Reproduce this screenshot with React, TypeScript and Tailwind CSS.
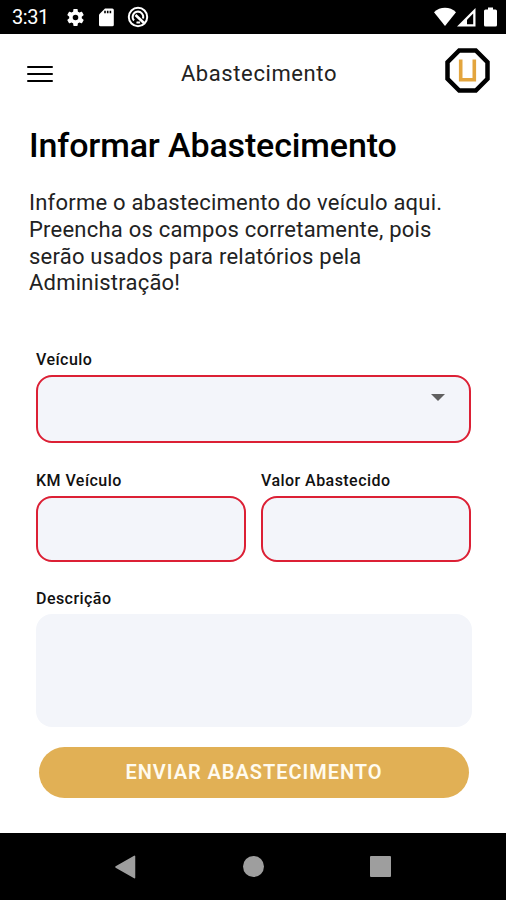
import React from "react";

function StatusBar() {
  return (
    <div className="flex h-[34px] items-center bg-black pl-3 text-white">
      <span className="w-[37px] whitespace-nowrap pt-px text-[20px] leading-[33px] tracking-[-0.4px]">3:31</span>
      <svg className="ml-4 size-[21px]" viewBox="0 0 24 24" fill="currentColor">
        <path d="M19.14 12.94c.04-.3.06-.61.06-.94 0-.32-.02-.64-.07-.94l2.03-1.58c.18-.14.23-.41.12-.61l-1.92-3.32c-.12-.22-.37-.29-.59-.22l-2.39.96c-.5-.38-1.03-.7-1.62-.94l-.36-2.54c-.04-.24-.24-.41-.48-.41h-3.84c-.24 0-.43.17-.47.41l-.36 2.54c-.59.24-1.13.57-1.62.94l-2.39-.96c-.22-.08-.47 0-.59.22L2.74 8.87c-.12.21-.08.47.12.61l2.03 1.58c-.05.3-.09.63-.09.94s.02.64.07.94l-2.03 1.58c-.18.14-.23.41-.12.61l1.92 3.32c.12.22.37.29.59.22l2.39-.96c.5.38 1.03.7 1.62.94l.36 2.54c.05.24.24.41.48.41h3.84c.24 0 .44-.17.47-.41l.36-2.54c.59-.24 1.13-.56 1.62-.94l2.39.96c.22.08.47 0 .59-.22l1.92-3.32c.12-.22.07-.47-.12-.61l-2.01-1.58zM12 15.2A3.2 3.2 0 1 1 12 8.800a3.2 3.2 0 0 1 0 6.400z" />
      </svg>
      <svg className="ml-[13px] h-[19px] w-[15px]" viewBox="0 0 15 19">
        <path d="M6 .5h7.300A1.500 1.500 0 0 1 14.800 2v14.800a1.500 1.500 0 0 1-1.500 1.500H1.500A1.500 1.500 0 0 1 0 16.800V6.500z" fill="white" />
        <path d="M6 2.700v2.600M8.700 2.700v2.600M11.400 2.700v2.600" stroke="black" strokeWidth="1.600" />
      </svg>
      <svg className="ml-[13px] size-[22px]" viewBox="0 0 22 22" fill="none" stroke="white">
        <circle cx="11" cy="11" r="9.200" strokeWidth="2" />
        <path d="M7 14.500A5.300 5.300 0 1 1 16 12.500M9.500 16.200a5.300 5.300 0 0 0 3.500 0" strokeWidth="2" />
        <path d="M8.500 9l8.500 8" strokeWidth="2.600" />
      </svg>
      <svg className="ml-auto h-[20px] w-[22px]" viewBox="0 0 22 20">
        <path d="M0 5.200C6-.6 16-.6 22 5.200L11 19z" fill="white" />
      </svg>
      <svg className="ml-px h-[19px] w-[19px]" viewBox="0 0 19 19">
        <path d="M18.500 0v18.500H0z" fill="white" />
        <path d="M16.200 5.500v10.700H10v-4.500z" fill="black" />
      </svg>
      <svg className="ml-2 mr-[9px] h-[20px] w-[13px]" viewBox="0 0 13 20">
        <path d="M4 .5h5v2h2.500A1.500 1.500 0 0 1 13 4v14a1.500 1.500 0 0 1-1.500 1.500h-10A1.500 1.500 0 0 1 0 18V4a1.500 1.500 0 0 1 1.500-1.500H4z" fill="white" />
      </svg>
    </div>
  );
}

function Header() {
  return (
    <header className="flex h-[78px] items-center justify-between pl-[27px] pr-4">
      <button aria-label="Menu" className="mt-px flex w-[45px] flex-col gap-[5px]">
        <span className="h-[2px] w-[26px] rounded-full bg-black" />
        <span className="h-[2px] w-[26px] rounded-full bg-black" />
        <span className="h-[2px] w-[26px] rounded-full bg-black" />
      </button>
      <span className="mt-[2px] pl-px text-[22px] leading-[30px] tracking-[0.6px] text-[#222]">Abastecimento</span>
      <svg className="mb-[5px] size-[45px]" viewBox="0 0 45 45" fill="none">
        <path d="M14.200 2.500h16.600l11.700 11.700v16.600L30.800 42.500H14.200L2.500 30.800V14.200z" stroke="black" strokeWidth="4.500" />
        <path d="M15.700 11.500v20.300h13.600V11.500" stroke="#E3A53E" strokeWidth="3.600" />
      </svg>
    </header>
  );
}

function Label({ children }: { children: React.ReactNode }) {
  return <label className="block h-5 whitespace-nowrap text-[16px] font-medium leading-5 tracking-[0.450px] text-[#111]">{children}</label>;
}

export default function App() {
  return (
    <div className="flex h-[900px] w-[506px] flex-col overflow-hidden bg-white font-['Roboto',sans-serif]">
      <StatusBar />
      <Header />
      <main className="flex flex-1 flex-col pl-9 pr-[35px]">
        <div className="-ml-[7px] pt-[12px]">
          <h1 className="whitespace-nowrap text-[34px] font-medium leading-[42px] tracking-[-0.14px] text-black">Informar Abastecimento</h1>
          <p className="mt-[24px] whitespace-nowrap text-[22px] leading-[26.800px] tracking-[0.220px] text-[#222]">
            Informe o abastecimento do veículo aqui.<br />
            Preencha os campos corretamente, pois<br />
            serão usados para relatórios pela<br />
            Administração!
          </p>
        </div>
        <div className="mt-[53px]">
          <Label>Veículo</Label>
          <div className="mt-[5px] flex h-[68px] items-start justify-end rounded-[16px] border-2 border-[#DC2035] bg-[#F3F5FA] pr-[24px] pt-[17px]">
            <span className="border-x-[7px] border-t-[7px] border-x-transparent border-t-[#606060]" />
          </div>
        </div>
        <div className="mt-7 grid grid-cols-2 gap-[15px]">
          <div>
            <Label>KM Veículo</Label>
            <div className="mt-[5px] h-[66px] rounded-[16px] border-2 border-[#DC2035] bg-[#F3F5FA]" />
          </div>
          <div>
            <Label>Valor Abastecido</Label>
            <div className="mt-[5px] h-[66px] rounded-[16px] border-2 border-[#DC2035] bg-[#F3F5FA]" />
          </div>
        </div>
        <div className="mt-[27px]">
          <Label>Descrição</Label>
          <div className="-mr-px mt-[5px] h-[113px] rounded-[16px] bg-[#F3F5FA]" />
        </div>
        <button className="ml-[3px] mr-[2px] mt-5 h-[51px] whitespace-nowrap rounded-full bg-[#E1B055] pb-[2px] text-[20px] font-semibold tracking-[0.960px] text-[#FFFBEF]">
          ENVIAR ABASTECIMENTO
        </button>
      </main>
      <nav className="flex h-[67px] items-center justify-between bg-black pl-[115px] pr-[115px]">
        <svg className="h-6 w-[21px]" viewBox="0 0 21 24">
          <path d="M19.500 1.300v21.400L1 12z" fill="#9E9E9E" stroke="#9E9E9E" strokeWidth="1.500" strokeLinejoin="round" />
        </svg>
        <span className="size-[21px] rounded-full bg-[#9E9E9E]" />
        <span className="size-[21px] rounded-[1px] bg-[#9E9E9E]" />
      </nav>
    </div>
  );
}
